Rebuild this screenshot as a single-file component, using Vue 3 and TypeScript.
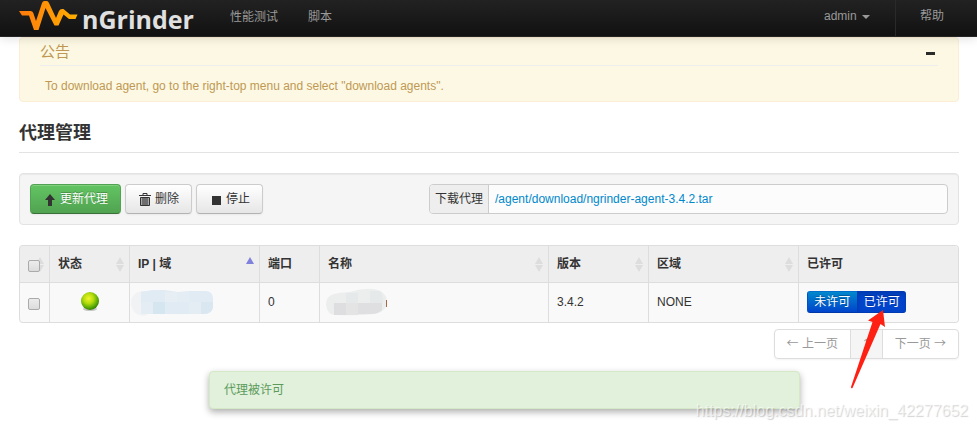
<script setup lang="ts">
import { ref } from 'vue'

interface Column {
  key: string
  label: string
  sort: 'both' | 'asc' | 'none'
}

interface Agent {
  port: number
  version: string
  region: string
}

const columns: Column[] = [
  { key: 'state', label: '状态', sort: 'both' },
  { key: 'ip', label: 'IP | 域', sort: 'asc' },
  { key: 'port', label: '端口', sort: 'none' },
  { key: 'name', label: '名称', sort: 'both' },
  { key: 'version', label: '版本', sort: 'both' },
  { key: 'region', label: '区域', sort: 'both' },
  { key: 'approved', label: '已许可', sort: 'none' },
]

const agents: Agent[] = [{ port: 0, version: '3.4.2', region: 'NONE' }]
const approved = ref(true)
const noticeOpen = ref(true)
</script>

<template>
  <div class="page">
    <header class="navbar">
      <a class="brand" href="#">
        <svg class="pulse" width="60" height="32" viewBox="0 0 60 32" aria-hidden="true">
          <defs>
            <linearGradient id="pulse-fill" x1="0" x2="1" y1="0" y2="0">
              <stop offset="0" stop-color="#ff7a0c" />
              <stop offset="1" stop-color="#ffb000" />
            </linearGradient>
          </defs>
          <path
            d="M0 11H11.500Q13.500 11 14.300 13L17 21L23 3Q23.700 1 25.500 1H27.500Q29.300 1 30 3L37 18L40 11Q41 9 43 9H44.500L51 14.500H58.500L56.500 19H50L44.500 14.500L39.500 25.500H35.500L26.500 8L19.500 30H15L10 15.500H3Z"
            fill="url(#pulse-fill)"
          />
        </svg>
        <span class="brand-name">nGrinder</span>
      </a>
      <nav class="menu">
        <a href="#">性能测试</a>
        <a href="#">脚本</a>
      </nav>
      <nav class="menu-right">
        <a class="user" href="#">admin <span class="caret"></span></a>
        <a class="help" href="#">帮助</a>
      </nav>
    </header>

    <main class="container">
      <section class="notice">
        <div class="notice-head">
          <h2>公告</h2>
          <button type="button" class="collapse" aria-label="公告" @click="noticeOpen = !noticeOpen">
            <span class="minus"></span>
          </button>
        </div>
        <p v-if="noticeOpen">To download agent, go to the right-top menu and select "download agents".</p>
      </section>

      <h1>代理管理</h1>

      <section class="toolbar">
        <div class="actions">
          <button type="button" class="btn success">
            <svg width="14" height="14" viewBox="0 0 14 14" aria-hidden="true">
              <path d="M7 1L12 7H9V13H5V7H2Z" fill="#333" />
            </svg>
            更新代理
          </button>
          <button type="button" class="btn">
            <svg width="14" height="14" viewBox="0 0 14 14" aria-hidden="true">
              <path d="M5 2V0.500H9V2M1 2.500H13" fill="none" stroke="#333" />
              <path d="M2.500 4.500V12.500H11.500V4.500ZM5 4V12M7 4V12M9 4V12" fill="#aaa" stroke="#333" />
            </svg>
            删除
          </button>
          <button type="button" class="btn">
            <svg width="14" height="14" viewBox="0 0 14 14" aria-hidden="true">
              <path d="M3 3H12V12H3Z" fill="#333" />
            </svg>
            停止
          </button>
        </div>
        <div class="download">
          <span class="addon">下载代理</span>
          <span class="uneditable"><a href="#">/agent/download/ngrinder-agent-3.4.2.tar</a></span>
        </div>
      </section>

      <table class="agents">
        <colgroup>
          <col class="c-check" />
          <col v-for="c in columns" :key="c.key" :class="'c-' + c.key" />
        </colgroup>
        <thead>
          <tr>
            <th class="check">
              <div class="head">
                <input type="checkbox" aria-label="代理" />
                <span class="sorter under"></span>
              </div>
            </th>
            <th v-for="c in columns" :key="c.key">
              <div class="head">
                <span>{{ c.label }}</span>
                <span v-if="c.sort !== 'none'" class="sorter" :class="c.sort"></span>
              </div>
            </th>
          </tr>
        </thead>
        <tbody>
          <tr v-for="(a, i) in agents" :key="i">
            <td class="check"><input type="checkbox" aria-label="代理" /></td>
            <td class="state">
              <svg width="20" height="22" viewBox="0 0 20 22" aria-hidden="true">
                <defs>
                  <radialGradient id="ball" cx="0.42" cy="0.36" r="0.62">
                    <stop offset="0" stop-color="#f2f52a" />
                    <stop offset="0.45" stop-color="#b4dc0c" />
                    <stop offset="0.8" stop-color="#5fae05" />
                    <stop offset="1" stop-color="#3b8600" />
                  </radialGradient>
                </defs>
                <ellipse cx="10" cy="18" rx="7" ry="2" fill="#000" opacity="0.2" />
                <circle cx="10" cy="10" r="9" fill="url(#ball)" />
              </svg>
            </td>
            <td class="masked">
              <svg width="86" height="28" viewBox="0 0 86 28" aria-hidden="true">
                <path d="M12 2Q1 4 1 14Q2 26 14 27L20 24V2Z" fill="#f0f2f3" />
                <path d="M11 3L22 1H34L48 3L60 2H76Q83 3 83 9V18Q82 25 74 25H11Z" fill="#e1ebf4" />
                <path d="M23 13H35V25H23Z" fill="#d5e6f1" />
                <path d="M11 13H23V25H11ZM47 3H59V13H47ZM59 13H71V25H59Z" fill="#e5edf4" />
                <path d="M35 3H47V13H35Z" fill="#e7eff5" />
                <path d="M71 13H83V18Q82 25 74 25H71Z" fill="#dae7f1" />
              </svg>
            </td>
            <td>{{ a.port }}</td>
            <td class="masked">
              <svg width="66" height="30" viewBox="0 0 66 30" aria-hidden="true">
                <path d="M10 6Q18 4 26 4Q38 0 50 1Q62 3 63 13Q63 24 50 26Q34 28 12 27Q3 27 2 17Q2 8 10 6Z" fill="#eceeee" />
                <path d="M22 5H34V15H22ZM46 3H56Q59 6 59 15H46Z" fill="#e6e9e9" />
                <path d="M10 15H22V27H10Z" fill="#dedddf" />
                <path d="M22 15H34V27H22Z" fill="#e5e4e5" />
                <path d="M34 15H58V22Q54 26 48 26H34Z" fill="#dfdfe1" />
                <path d="M62.500 12V19" stroke="#a86a45" stroke-width="1" />
              </svg>
            </td>
            <td>{{ a.version }}</td>
            <td>{{ a.region }}</td>
            <td class="approve">
              <div class="toggle">
                <button type="button" :class="{ active: !approved }" @click="approved = false">未许可</button>
                <button type="button" :class="{ active: approved }" @click="approved = true">已许可</button>
              </div>
            </td>
          </tr>
        </tbody>
      </table>

      <nav class="pager">
        <a href="#"><span class="arrow">←</span> 上一页</a>
        <a href="#" class="current">1</a>
        <a href="#">下一页 <span class="arrow">→</span></a>
      </nav>
    </main>

    <div class="toast" role="status">代理被许可</div>
    <svg class="pointer" width="36" height="80" viewBox="0 0 36 80" aria-hidden="true">
      <path d="M33 0L18 10.500L22.500 12L1 77Q1 79 2.500 78L30.500 14L35 17Z" fill="#ff2014" />
    </svg>
    <div class="watermark">https://blog.csdn.net/weixin_42277652</div>
  </div>
</template>

<style>
body {
  margin: 0;
  background: #fff;
}
</style>

<style scoped>
.page {
  position: relative;
  min-height: 100vh;
  overflow: hidden;
  box-sizing: border-box;
  font-family: "Liberation Sans", "Noto Sans CJK SC", sans-serif;
  font-size: 12px;
  line-height: 20px;
  color: #333;
}
.page * {
  box-sizing: border-box;
}
a {
  color: #08c;
  text-decoration: none;
}
button {
  font: inherit;
  cursor: pointer;
}
.navbar {
  position: relative;
  z-index: 2;
  display: flex;
  align-items: stretch;
  height: 37px;
  padding: 0 15px 0 19px;
  background: linear-gradient(#222, #111);
  border-bottom: 1px solid #252525;
  box-shadow: 0 1px 10px rgba(0, 0, 0, 0.14);
}
.navbar a {
  color: #999;
}
.brand {
  display: flex;
  width: 196px;
}
.pulse {
  flex: none;
}
.navbar .brand-name {
  margin-left: 3px;
  font: bold 25px/38px "Open Sans", sans-serif;
  color: #e0e0e0;
}
.menu {
  display: flex;
  gap: 30px;
  padding: 7px 15px 6px;
}
.menu-right {
  display: flex;
  margin-left: auto;
}
.menu-right a {
  padding: 6px 25px 6px 24px;
}
.menu-right .help {
  border-left: 1px solid #2a2a2a;
  padding: 6px 18px 6px 24px;
}
.caret {
  display: inline-block;
  margin-left: 2px;
  vertical-align: middle;
  border: 4px solid transparent;
  border-top-color: #999;
  border-bottom: 0;
}
.container {
  padding: 0 18px 0 19px;
}
.notice {
  padding: 0 20px 5px;
  background: #fcf8e3;
  border: 1px solid #fbeed5;
  border-radius: 4px;
  color: #c09853;
}
.notice-head {
  display: flex;
  justify-content: space-between;
  height: 28px;
  border-bottom: 1px solid #eee;
}
.notice h2 {
  margin: 0;
  font-size: 15px;
  font-weight: normal;
  line-height: 27px;
}
.collapse {
  padding: 4px 3px 0;
  background: none;
  border: 0;
}
.minus {
  display: block;
  width: 9px;
  height: 3px;
  background: #2b2b2b;
}
.notice p {
  margin: 0;
  padding: 10px 5px 0;
}
h1 {
  margin: 16px 0 20px;
  padding-bottom: 4px;
  font-size: 18px;
  line-height: 30px;
  border-bottom: 1px solid #e3e3e3;
}
.toolbar {
  display: flex;
  justify-content: space-between;
  padding: 10px;
  background: #f5f5f5;
  border: 1px solid #e3e3e3;
  border-radius: 4px;
  box-shadow: inset 0 1px 1px rgba(0, 0, 0, 0.05);
}
.actions {
  display: flex;
  gap: 4px;
}
.btn {
  display: flex;
  align-items: center;
  gap: 3px;
  height: 30px;
  padding: 0 12px;
  color: #333;
  background: linear-gradient(#fff, #e6e6e6);
  border: 1px solid #ccc;
  border-bottom-color: #b3b3b3;
  border-radius: 4px;
  box-shadow: inset 0 1px 0 rgba(255, 255, 255, 0.2), 0 1px 2px rgba(0, 0, 0, 0.05);
}
.btn svg {
  margin-top: 2px;
}
.btn.success {
  color: #fff;
  text-shadow: 0 -1px 0 rgba(0, 0, 0, 0.25);
  background: linear-gradient(#62c462, #51a351);
  border-color: #51a351;
  border-bottom-color: #387038;
}
.download {
  display: flex;
  flex: 0 0 519px;
  height: 30px;
  border: 1px solid #ccc;
  border-radius: 4px;
  background: #fcfcfc;
  line-height: 28px;
}
.addon {
  padding: 0 5px;
  background: #eee;
  border-right: 1px solid #ccc;
  border-radius: 3px 0 0 3px;
}
.uneditable {
  flex: 1;
  padding: 0 6px;
}
.agents {
  width: 100%;
  margin-top: 20px;
  table-layout: fixed;
  border: 1px solid #ddd;
  border-left: 0;
  border-radius: 4px;
  border-collapse: separate;
  border-spacing: 0;
}
.c-check { width: 30px; }
.c-state { width: 80px; }
.c-ip { width: 130px; }
.c-port { width: 60px; }
.c-version { width: 100px; }
.c-region { width: 150px; }
.c-approved { width: 160px; }
.agents th,
.agents td {
  padding: 8px;
  text-align: left;
  border-left: 1px solid #ddd;
}
.agents th {
  height: 36px;
  background: #eee;
}
.agents td {
  height: 40px;
  padding: 0 8px 2px;
  background: #f9f9f9;
  border-top: 1px solid #ddd;
}
.agents th:first-child { border-top-left-radius: 4px; }
.agents th:last-child { border-top-right-radius: 4px; }
.agents td:first-child { border-bottom-left-radius: 4px; }
.agents td:last-child { border-bottom-right-radius: 4px; }
.head {
  display: flex;
  align-items: center;
  justify-content: space-between;
  position: relative;
}
.sorter {
  display: flex;
  flex-direction: column;
  gap: 1px;
  margin-right: -3px;
}
.sorter::before,
.sorter::after {
  content: "";
  border: 4px solid transparent;
}
.sorter::before {
  border-top: 0;
  border-bottom: 7px solid #ddd;
}
.sorter::after {
  border-bottom: 0;
  border-top: 7px solid #ddd;
}
.sorter.asc::before {
  border-bottom-color: #8080dd;
}
.sorter.asc::after {
  border-top-color: transparent;
}
.under {
  position: absolute;
  right: 0;
}
input[type="checkbox"] {
  appearance: none;
  position: relative;
  z-index: 1;
  display: block;
  width: 12px;
  height: 12px;
  margin: 4px 0 0;
  border: 1px solid #aaa;
  border-radius: 2px;
  background: linear-gradient(#ececec, #dcdcdc);
}
.agents .state {
  text-align: center;
}
.agents .masked {
  padding: 0;
}
.agents .masked + td + .masked {
  padding-left: 4px;
}
.state svg,
.masked svg {
  display: block;
}
.state svg {
  margin: 0 auto;
}
.toggle {
  display: flex;
  width: 99px;
}
.toggle button {
  flex: 1;
  height: 22px;
  padding: 0;
  line-height: 20px;
  color: #fff;
  text-shadow: 0 -1px 0 rgba(0, 0, 0, 0.25);
  background: linear-gradient(#08c, #04c);
  border: 1px solid #04c;
  border-color: #0070cc #0050cc #0038a8;
  border-right: 0;
  border-radius: 3px 0 0 3px;
}
.toggle button + button {
  border-radius: 0 3px 3px 0;
}
.toggle button.active {
  background: #04c;
  border-color: #003bb3;
  box-shadow: inset 0 2px 4px rgba(0, 0, 0, 0.15);
}
.pager {
  display: flex;
  width: max-content;
  margin: 6px 0 0 auto;
  border: 1px solid #ddd;
  border-radius: 4px;
  box-shadow: 0 1px 2px rgba(0, 0, 0, 0.05);
  line-height: 28px;
}
.pager a {
  padding: 0 12px;
  color: #999;
}
.pager a + a {
  border-left: 1px solid #ddd;
}
.pager .current {
  background: #f5f5f5;
}
.arrow {
  font-family: "Noto Sans CJK SC", sans-serif;
  line-height: 20px;
}
.toast {
  position: absolute;
  top: 371px;
  left: 209px;
  right: 177px;
  padding: 8px 14px;
  color: #5c9a5c;
  background: #e1f1db;
  border: 1px solid #d6e9c6;
  border-radius: 4px;
  box-shadow: 0 3px 7px rgba(0, 0, 0, 0.32);
}
.pointer {
  position: absolute;
  top: 310px;
  right: 91px;
}
.watermark {
  position: absolute;
  right: 9px;
  top: 401px;
  font-size: 16px;
  color: rgba(255, 255, 255, 0.6);
  text-shadow: 1px 1px 1px rgba(0, 0, 0, 0.18);
}
</style>
